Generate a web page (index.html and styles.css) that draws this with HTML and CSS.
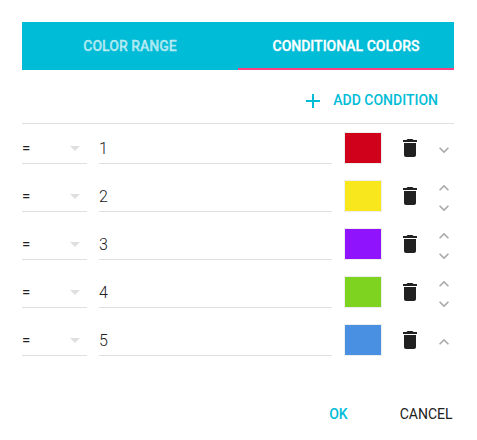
FILE: index.html
```html
<!DOCTYPE html>
<html lang="en">
<head>
<meta charset="utf-8">
<title>Conditional colors</title>
<link rel="stylesheet" href="styles.css">
</head>
<body>
<svg class="defs" aria-hidden="true">
  <symbol id="add" viewBox="0 0 24 24"><path d="M19 13h-6v6h-2v-6H5v-2h6V5h2v6h6v2z"/></symbol>
  <symbol id="caret" viewBox="0 0 24 24"><path d="M7 10l5 5 5-5z"/></symbol>
  <symbol id="trash" viewBox="0 0 24 24"><path d="M6 19c0 1.1.9 2 2 2h8c1.1 0 2-.9 2-2V7H6v12zM19 4h-3.5l-1-1h-5l-1 1H5v2h14V4z"/></symbol>
  <symbol id="up" viewBox="0 0 24 24"><path d="M12 8l-6 6 1.41 1.41L12 10.83l4.59 4.58L18 14z"/></symbol>
  <symbol id="down" viewBox="0 0 24 24"><path d="M16.59 8.59L12 13.17 7.41 8.59 6 10l6 6 6-6z"/></symbol>
</svg>
<main class="dialog">
  <nav class="tabs">
    <div class="tab">COLOR RANGE</div>
    <div class="tab active">CONDITIONAL COLORS</div>
  </nav>
  <div class="toolbar"><svg class="icon"><use href="#add"/></svg><span>ADD CONDITION</span></div>
  <section class="rows">
    <div class="row">
      <div class="select"><span>=</span><svg class="icon"><use href="#caret"/></svg></div>
      <div class="value">1</div>
      <div class="swatch red"></div>
      <svg class="icon trash"><use href="#trash"/></svg>
      <div class="order"><svg><use href="#down"/></svg></div>
    </div>
    <div class="row">
      <div class="select"><span>=</span><svg class="icon"><use href="#caret"/></svg></div>
      <div class="value">2</div>
      <div class="swatch yellow"></div>
      <svg class="icon trash"><use href="#trash"/></svg>
      <div class="order"><svg><use href="#up"/></svg><svg><use href="#down"/></svg></div>
    </div>
    <div class="row">
      <div class="select"><span>=</span><svg class="icon"><use href="#caret"/></svg></div>
      <div class="value">3</div>
      <div class="swatch purple"></div>
      <svg class="icon trash"><use href="#trash"/></svg>
      <div class="order"><svg><use href="#up"/></svg><svg><use href="#down"/></svg></div>
    </div>
    <div class="row">
      <div class="select"><span>=</span><svg class="icon"><use href="#caret"/></svg></div>
      <div class="value">4</div>
      <div class="swatch green"></div>
      <svg class="icon trash"><use href="#trash"/></svg>
      <div class="order"><svg><use href="#up"/></svg><svg><use href="#down"/></svg></div>
    </div>
    <div class="row">
      <div class="select"><span>=</span><svg class="icon"><use href="#caret"/></svg></div>
      <div class="value">5</div>
      <div class="swatch blue"></div>
      <svg class="icon trash"><use href="#trash"/></svg>
      <div class="order"><svg><use href="#up"/></svg></div>
    </div>
  </section>
  <footer class="actions">
    <span class="ok">OK</span>
    <span class="cancel">CANCEL</span>
  </footer>
</main>
</body>
</html>
```
FILE: styles.css
```css
* { box-sizing: border-box; }
body {
  margin: 0;
  background: #fff;
  color: #212121;
  font: 14px/20px Roboto, sans-serif;
}
.defs { display: none; }
.dialog { width: 432px; margin: 22px 0 0 22px; }
.icon { width: 24px; height: 24px; flex: none; fill: currentColor; }
.tabs { display: flex; height: 48px; background: #00bcd7; }
.tab {
  flex: 1;
  padding-top: 14px;
  text-align: center;
  font-weight: 500;
  -webkit-text-stroke: .3px;
  color: rgba(255, 255, 255, .65);
}
.tab.active { color: #fff; border-bottom: 2px solid #ff4081; }
.toolbar {
  display: flex;
  align-items: center;
  justify-content: flex-end;
  gap: 8px;
  height: 54px;
  padding: 8px 16px 0 0;
  border-bottom: 1px solid #e0e0e0;
  color: #00bcd7;
  font-weight: 500;
}
.toolbar span { padding-bottom: 2px; }
.row { display: flex; align-items: center; height: 48px; }
.select {
  display: flex;
  align-items: center;
  justify-content: space-between;
  width: 65px;
  height: 32px;
  padding-top: 1px;
  margin: 0 12px 0 0;
  border-bottom: 1px solid #e0e0e0;
  font-size: 15px;
}
.select .icon { color: #e0e0e0; }
.value {
  width: 233px;
  height: 32px;
  border-bottom: 1px solid #e0e0e0;
  font-size: 16px;
  font-weight: 300;
  line-height: 33px;
}
.swatch { width: 38px; height: 32px; margin: 0 16px 0 12px; border: 1px solid #eee; }
.red { background: #d0021b; }
.yellow { background: #f8e71c; }
.purple { background: #9013fe; }
.green { background: #7ed321; }
.blue { background: #4a90e2; }
.order {
  display: flex;
  flex-direction: column;
  width: 20px;
  margin: 4px 0 0 12px;
}
.order svg { width: 20px; height: 20px; fill: #aaa; }
.actions {
  display: flex;
  justify-content: flex-end;
  gap: 52px;
  padding: 40px 1.5px 0 0;
}
.ok { color: #00bcd7; font-weight: 500; }
```
